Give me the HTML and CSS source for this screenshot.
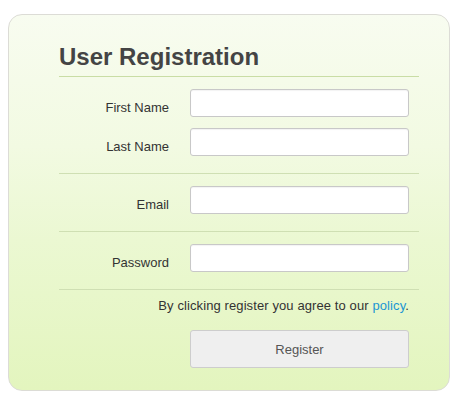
FILE: index.html
```html
<!DOCTYPE html>
<html>
<head>
<meta charset="utf-8">
<link rel="stylesheet" href="styles.css">
</head>
<body>
<div class="card">
  <form class="form">
    <h1 class="title">User Registration</h1>
    <div class="group">
      <div class="row"><label class="label">First Name</label><input class="field" type="text"></div>
      <div class="row"><label class="label">Last Name</label><input class="field" type="text"></div>
    </div>
    <div class="group">
      <div class="row"><label class="label">Email</label><input class="field" type="text"></div>
    </div>
    <div class="group">
      <div class="row"><label class="label">Password</label><input class="field" type="password"></div>
    </div>
    <p class="note">By clicking register you agree to our <a class="link" href="#">policy</a>.</p>
    <div class="actions"><button class="btn" type="button">Register</button></div>
  </form>
</div>
</body>
</html>
```
FILE: styles.css
```css
html, body {
  margin: 0;
  padding: 0;
  background: #fff;
}
body {
  font-family: "Liberation Sans", Arial, sans-serif;
  font-size: 13px;
  color: #333;
}
.card {
  box-sizing: border-box;
  width: 442px;
  height: 377px;
  margin: 14px 0 0 8px;
  border: 1px solid #dcdcd6;
  border-radius: 14px;
  background: linear-gradient(to bottom, #f8fcf0 0%, #f2fae2 35%, #ebf8d2 60%, #e3f5be 100%);
  padding: 28px 0 0 50px;
}
.form {
  width: 360px;
  margin: 0;
}
.title {
  margin: 0;
  font-size: 24px;
  line-height: 28px;
  font-weight: bold;
  color: #444;
  padding-bottom: 5px;
  border-bottom: 1px solid #c9dda5;
}
.group {
  display: flex;
  flex-direction: column;
  gap: 11px;
  padding: 12px 0 17px;
  border-bottom: 1px solid #cfdfb3;
}
.row {
  display: grid;
  grid-template-columns: 110px 219px;
  column-gap: 21px;
  align-items: start;
}
.label {
  text-align: right;
  line-height: 16px;
  padding-top: 11px;
  color: #333;
}
.field {
  box-sizing: border-box;
  width: 219px;
  height: 28px;
  margin: 0;
  border: 1px solid #c8c8c8;
  border-radius: 3px;
  background: #fff;
  box-shadow: inset 0 1px 1px rgba(0,0,0,0.05);
  padding: 0 6px;
  font: inherit;
}
.note {
  width: 350px;
  margin: 8px 0 0;
  line-height: 16px;
  text-align: right;
  letter-spacing: 0.1px;
  color: #333;
}
.link {
  color: #1a96d4;
  text-decoration: none;
}
.actions {
  width: 350px;
  display: flex;
  justify-content: flex-end;
  margin-top: 16px;
}
.btn {
  box-sizing: border-box;
  width: 219px;
  height: 38px;
  border: 1px solid #cdcdcd;
  border-radius: 3px;
  background: #efefef;
  color: #555;
  font-family: "Liberation Sans", Arial, sans-serif;
  font-size: 13px;
  padding: 0;
}
```
